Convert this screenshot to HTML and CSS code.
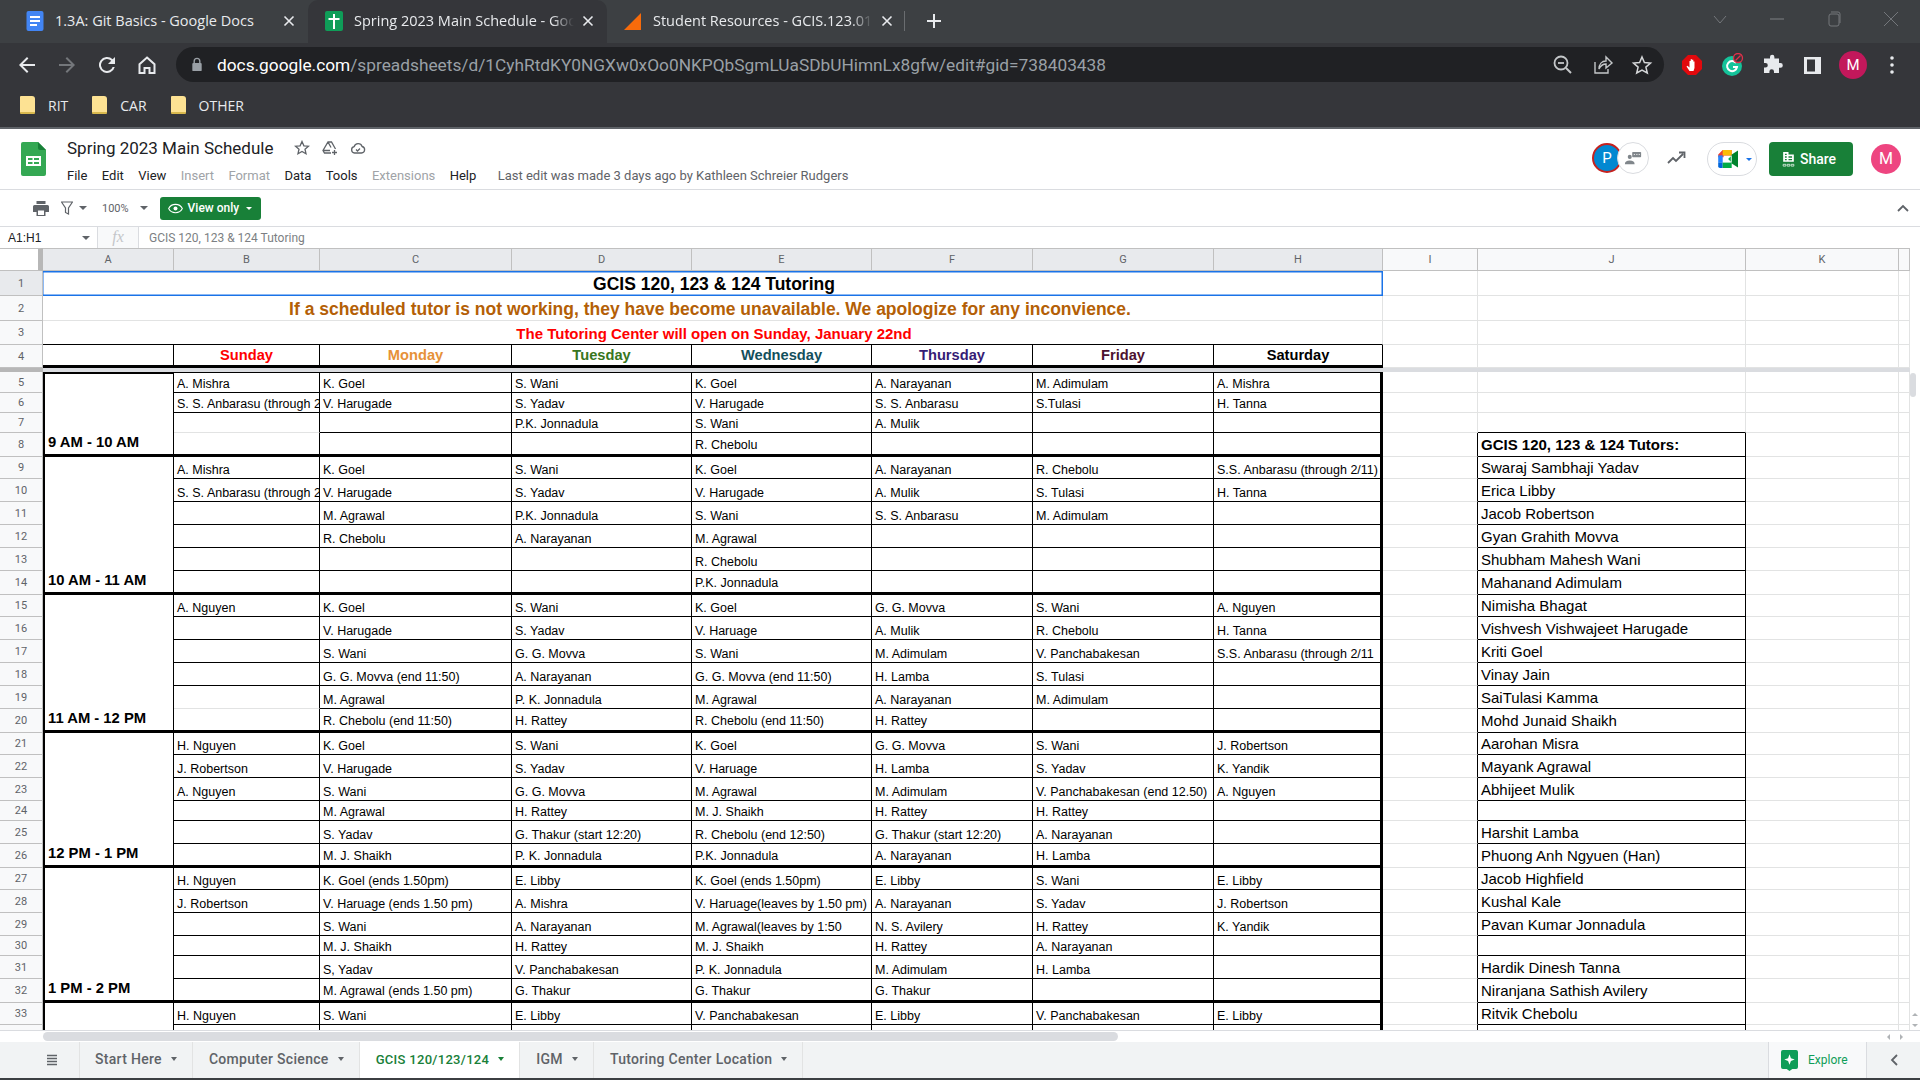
FILE: index.html
```html
<!DOCTYPE html>
<html lang="en">
  <head>
    <meta charset="UTF-8" />
    <title>Spring 2023 Main Schedule - Google Sheets</title>
    <link rel="stylesheet" href="styles.css">
  </head>

  <body>
    <!-- browser frame -->
    <div class="tabstrip">
      <div class="tab">
        <svg class="favicon" viewBox="0 0 20 20"><rect x="1.5" width="17" height="20" rx="2" fill="#4285f4"/><path d="M5 6h10M5 10h10M5 14h7" stroke="#fff" stroke-width="2"/></svg>
        <span class="tabtitle">1.3A: Git Basics - Google Docs</span>
        <svg class="tabclose" viewBox="0 0 12 12"><path d="M1.5 1.5l9 9M10.5 1.5l-9 9" stroke="#e8eaed" stroke-width="1.6"/></svg>
      </div>
      <div class="tab active">
        <svg class="favicon" viewBox="0 0 20 20"><rect x="1" width="18" height="20" rx="2" fill="#0f9d58"/><path d="M10 3v15M4.500 8h11" stroke="#fff" stroke-width="2"/></svg>
        <span class="tabtitle fade">Spring 2023 Main Schedule - Google Sheets</span>
        <svg class="tabclose" viewBox="0 0 12 12"><path d="M1.5 1.5l9 9M10.5 1.5l-9 9" stroke="#e8eaed" stroke-width="1.6"/></svg>
      </div>
      <div class="tab">
        <svg class="favicon" viewBox="0 0 20 20"><path d="M18 2v17H1z" fill="#f76b0b"/></svg>
        <span class="tabtitle fade">Student Resources - GCIS.123.01-2</span>
        <svg class="tabclose" viewBox="0 0 12 12"><path d="M1.5 1.5l9 9M10.5 1.5l-9 9" stroke="#e8eaed" stroke-width="1.6"/></svg>
      </div>
      <div class="tabsep"></div>
      <svg class="newtab" viewBox="0 0 16 16"><path d="M8 1v14M1 8h14" stroke="#e8eaed" stroke-width="2"/></svg>
      <div class="winbtns">
        <svg viewBox="0 0 16 16"><path d="M2 5l6 7 6-7" fill="none" stroke="#74777b"/></svg>
        <svg viewBox="0 0 16 16"><path d="M1 8h14" stroke="#74777b" stroke-width="1.2"/></svg>
        <svg viewBox="0 0 16 16"><rect x="3" y="3" width="10" height="12" rx="2" fill="none" stroke="#74777b"/><path d="M5 1h7a2 2 0 0 1 2 2v9" fill="none" stroke="#74777b"/></svg>
        <svg viewBox="0 0 16 16"><path d="M1 1l14 14M15 1L1 15" stroke="#74777b"/></svg>
      </div>
    </div>

    <div class="navbar">
      <svg class="navicon" viewBox="0 0 24 24"><path d="M20 11H7.800l5.600-5.600L12 4l-8 8 8 8 1.400-1.400L7.800 13H20z" fill="#e8eaed"/></svg>
      <svg class="navicon" viewBox="0 0 24 24"><path d="M4 11h12.200l-5.600-5.600L12 4l8 8-8 8-1.400-1.400 5.600-5.600H4z" fill="#74777b"/></svg>
      <svg class="navicon" viewBox="0 0 24 24"><path d="M17.650 6.350A8 8 0 1 0 19.740 14h-2.080a6 6 0 1 1-1.420-6.240L13 11h7V4z" fill="#e8eaed"/></svg>
      <svg class="navicon" viewBox="0 0 24 24"><path d="M12 4.500l7.500 6.800V20h-5v-5h-5v5h-5v-8.700z" fill="none" stroke="#e8eaed" stroke-width="2"/></svg>
      <div class="omnibox">
        <svg class="lock" viewBox="0 0 12 16"><path d="M3 7V4.500a3 3 0 0 1 6 0V7" fill="none" stroke="#9aa0a6" stroke-width="1.500"/><rect x="1" y="6.500" width="10" height="8.500" rx="1" fill="#9aa0a6"/></svg>
        <span class="url"><b>docs.google.com</b>/spreadsheets/d/1CyhRtdKY0NGXw0xOo0NKPQbSgmLUaSDbUHimnLx8gfw/edit#gid=738403438</span>
        <div class="omniicons">
          <svg class="navicon" viewBox="0 0 24 24"><circle cx="11" cy="10" r="6.500" fill="none" stroke="#c4c7c9" stroke-width="1.800"/><path d="M8 10h6" stroke="#c4c7c9" stroke-width="1.800"/><path d="M16 15l5 5" stroke="#c4c7c9" stroke-width="2"/></svg>
          <svg class="navicon" viewBox="0 0 24 24"><path d="M5 9v11h13v-4M9 16c0-5 3-8 7-8V4l6 6-6 5v-4c-3 0-5 1-7 5z" fill="none" stroke="#c4c7c9" stroke-width="1.400"/></svg>
          <svg class="navicon" viewBox="0 0 24 24"><path d="M12 4l2.400 5.600 6.100.5-4.600 4 1.400 5.900L12 17l-5.300 3 1.400-5.900-4.600-4 6.100-.5z" fill="none" stroke="#d5d7d9" stroke-width="1.500"/></svg>
        </div>
      </div>
      <svg class="navicon" viewBox="0 0 24 24"><path d="M8 2h8l6 6v8l-6 6H8l-6-6V8z" fill="#e2090d"/><path d="M9.500 18l-3-4.500 1-.8 2 1.800V8h1.200v4V6.200h1.300V12V6.800h1.300V12.500V8.500h1.200V15l-1 3z" fill="#fff"/></svg>
      <svg class="navicon" viewBox="0 0 24 24"><circle cx="12" cy="13" r="10" fill="#15c39a"/><path d="M16 10a5 5 0 1 0 1 4h-4" fill="none" stroke="#fff" stroke-width="2"/><circle cx="18" cy="5" r="4.500" fill="#35363a" stroke="#e2304a" stroke-width="1.300"/><path d="M15.500 7.500l5-5" stroke="#e2304a" stroke-width="1.300"/></svg>
      <svg class="navicon" viewBox="0 0 24 24"><path d="M10 4a2.200 2.200 0 0 1 4.400 0v1.500H19v4.600h1.500a2.300 2.300 0 0 1 0 4.600H19V20h-5v-1.500a2.300 2.300 0 0 0-4.600 0V20H4v-5.500h1.500a2.300 2.300 0 0 0 0-4.600H4V5.500h6z" fill="#e8eaed"/></svg>
      <svg class="navicon" viewBox="0 0 24 24"><rect x="4" y="4" width="17" height="17" fill="#e8eaed"/><rect x="7" y="6.500" width="8" height="12" fill="#35363a"/></svg>
      <div class="chromeuser">M</div>
      <svg class="kebab" viewBox="0 0 4 20"><circle cx="2" cy="3" r="1.800" fill="#e8eaed"/><circle cx="2" cy="10" r="1.800" fill="#e8eaed"/><circle cx="2" cy="17" r="1.800" fill="#e8eaed"/></svg>
    </div>

    <div class="bookmarks">
      <span class="mark"><i class="folder"></i>RIT</span>
      <span class="mark"><i class="folder"></i>CAR</span>
      <span class="mark"><i class="folder"></i>OTHER</span>
    </div>

    <!-- sheets app bar -->
    <header class="docbar">
      <svg class="sheetlogo" viewBox="0 0 25 34"><path d="M2 0h15l8 8v24a2 2 0 0 1-2 2H2a2 2 0 0 1-2-2V2a2 2 0 0 1 2-2z" fill="#34a853"/><path d="M17 0l8 8h-6a2 2 0 0 1-2-2z" fill="#188038"/><path d="M5 14h15v10H5zM7 16v2h4.500v-2zm6 0v2h5v-2zM7 20v2h4.500v-2zm6 0v2h5v-2z" fill="#fff" fill-rule="evenodd"/></svg>
      <div class="doctext">
        <div class="docline">
          <span class="doctitle">Spring 2023 Main Schedule</span>
          <svg class="docicon" viewBox="0 0 16 16"><path d="M8 1.500l1.900 4.300 4.600.4-3.500 3 1 4.500L8 11.400l-4 2.300 1-4.500-3.500-3 4.600-.4z" fill="none" stroke="#5f6368" stroke-width="1.300"/></svg>
          <svg class="docicon" viewBox="0 0 16 16"><path d="M9 13H2.500L1 10.500 6 2h3.500l4 7M6 2l3 5.500M1 10.500h7" fill="none" stroke="#5f6368" stroke-width="1.300"/><path d="M12.500 10v5M10 12.500h5" stroke="#5f6368" stroke-width="1.300"/></svg>
          <svg class="docicon" viewBox="0 0 16 16"><path d="M4.500 13a3.200 3.200 0 0 1-.4-6.300 4.200 4.200 0 0 1 8-.2A3.300 3.300 0 0 1 11.500 13zM6 9.500l1.500 1.500 2.500-2.500" fill="none" stroke="#5f6368" stroke-width="1.300"/></svg>
        </div>
        <nav class="menus">
          <span>File</span><span>Edit</span><span>View</span><span class="off">Insert</span><span class="off">Format</span><span>Data</span><span>Tools</span><span class="off">Extensions</span><span>Help</span>
          <span class="lastedit">Last edit was made 3 days ago by Kathleen Schreier Rudgers</span>
        </nav>
      </div>
      <div class="docright">
        <div class="avatars">
          <div class="avp">P</div>
          <div class="avchat">
            <svg viewBox="0 0 22 16"><circle cx="7" cy="6" r="2.500" fill="#80868b"/><path d="M1 15c0-3 2-4.500 6-4.500s6 1.500 6 4.500z" fill="#80868b"/><rect x="10" y="0" width="11" height="6.500" rx="1" fill="#80868b"/><path d="M12 3h1.500M15 3h1.500M18 3h1.500" stroke="#fff"/></svg>
          </div>
        </div>
        <svg class="trend" viewBox="0 0 20 14"><path d="M1 12l5-5 3 3 7-7M12 1.500h5.500V7" fill="none" stroke="#5f6368" stroke-width="1.800"/></svg>
        <div class="meet">
          <svg viewBox="0 0 24 20"><path d="M0 5l5-5h10v6H6v2H0z" fill="#ea4335" transform="translate(0 0)"/><path d="M5 0h10v6H5z" fill="#fbbc04"/><path d="M0 6h5v8H0z" fill="#2684fc"/><path d="M0 14h5v6H2a2 2 0 0 1-2-2z" fill="#0066da"/><path d="M5 14h10v6H5z" fill="#00ac47"/><path d="M15 5v10l7 4.500V.5z" fill="#00832d"/><path d="M15 6h-1v8h1l-4-4z" fill="#00ac47"/></svg>
          <i class="caret blue"></i>
        </div>
        <div class="share">
          <svg viewBox="0 0 14 18"><path d="M1 1h6v3h6v8H1zM3 3v1.500h2V3zm0 3v1.500h2V6zm4 0v1.500h4V6zM3 9v1.500h2V9zm4 0v1.500h4V9z" fill="#fff" fill-rule="evenodd"/><path d="M1 15h3v2H1zM5.500 15h3v2h-3zM10 15h3v2h-3z" fill="none" stroke="#fff" stroke-width=".8"/></svg>
          Share
        </div>
        <div class="appuser">M</div>
      </div>
    </header>

    <div class="toolbar">
      <svg class="printer" viewBox="0 0 16 15"><path d="M3.500 0h9v3h-9zM1.500 4h13A1.500 1.500 0 0 1 16 5.500V11h-3.500v4h-9v-4H0V5.500A1.500 1.500 0 0 1 1.500 4z" fill="#5f6368"/><path d="M5 9.500h6V14H5z" fill="#fff"/></svg>
      <svg class="funnel" viewBox="0 0 12 14"><path d="M.5 1h11L7.500 7v6l-3-1.500V7z" fill="none" stroke="#5f6368" stroke-width="1.200"/></svg>
      <i class="caret"></i>
      <span class="zoomlevel">100%</span>
      <i class="caret zoomcaret"></i>
      <div class="viewonly">
        <svg viewBox="0 0 18 12"><path d="M9 1C5 1 2 3.500 .8 6 2 8.500 5 11 9 11s7-2.500 8.200-5C16 3.500 13 1 9 1z" fill="none" stroke="#fff" stroke-width="1.300"/><circle cx="9" cy="6" r="2.400" fill="#fff"/></svg>
        View only
        <i class="caret white"></i>
      </div>
      <svg class="collapse" viewBox="0 0 12 8"><path d="M1 7l5-5 5 5" fill="none" stroke="#5f6368" stroke-width="1.800"/></svg>
    </div>

    <div class="formulabar">
      <div class="namebox">A1:H1<i class="caret"></i></div>
      <div class="fx"><em>fx</em></div>
      <div class="formula">GCIS 120, 123 &amp; 124 Tutoring</div>
    </div>

    <!-- grid -->
    <div class="sheetarea">
      <div class="gridclip">
        <table class="grid">
          <colgroup>
            <col class="c-head"><col class="c-a"><col class="c-b"><col class="c-c"><col class="c-d"><col class="c-e"><col class="c-f"><col class="c-g"><col class="c-h"><col class="c-i"><col class="c-j"><col class="c-k"><col class="c-l">
          </colgroup>
          <tr class="letters">
            <th class="corner"></th><th class="sel">A</th><th class="sel">B</th><th class="sel">C</th><th class="sel">D</th><th class="sel">E</th><th class="sel">F</th><th class="sel">G</th><th class="sel">H</th><th>I</th><th>J</th><th>K</th><th></th>
          </tr>
          <tr class="h25"><th class="sel">1</th><td colspan="8" class="banner title selected">GCIS 120, 123 &amp; 124 Tutoring</td><td></td><td></td><td></td><td></td></tr>
          <tr class="h25"><th>2</th><td colspan="8" class="banner amber">If a scheduled tutor is not working, they have become unavailable. We apologize for any inconvience.</td><td></td><td></td><td></td><td></td></tr>
          <tr class="h24"><th>3</th><td colspan="8" class="banner red">The Tutoring Center will open on Sunday, January 22nd</td><td></td><td></td><td></td><td></td></tr>
          <tr class="h23 days end">
            <th>4</th><td></td><td class="sun">Sunday</td><td class="mon">Monday</td><td class="tue">Tuesday</td><td class="wed">Wednesday</td><td class="thu">Thursday</td><td class="fri">Friday</td><td class="sat">Saturday</td><td></td><td></td><td></td><td></td>
          </tr>
          <tr class="freeze"><th></th><td colspan="12"></td></tr>

          <tr class="h21 first"><th>5</th><td rowspan="4" class="slot">9 AM - 10 AM</td><td>A. Mishra</td><td>K. Goel</td><td>S. Wani</td><td>K. Goel</td><td>A. Narayanan</td><td>M. Adimulam</td><td>A. Mishra</td><td></td><td></td><td></td><td></td></tr>
          <tr class="h20"><th>6</th><td>S. S. Anbarasu (through 2/11)</td><td>V. Harugade</td><td>S. Yadav</td><td>V. Harugade</td><td>S. S. Anbarasu</td><td>S.Tulasi</td><td>H. Tanna</td><td></td><td></td><td></td><td></td></tr>
          <tr class="h20"><th>7</th><td class="thin"></td><td></td><td>P.K. Jonnadula</td><td>S. Wani</td><td>A. Mulik</td><td></td><td></td><td></td><td class="above"></td><td></td><td></td></tr>
          <tr class="h24 end t"><th>8</th><td></td><td></td><td></td><td>R. Chebolu</td><td></td><td></td><td></td><td></td><td class="tutor head">GCIS 120, 123 &amp; 124 Tutors:</td><td></td><td></td></tr>

          <tr class="h22 t"><th>9</th><td rowspan="6" class="slot">10 AM - 11 AM</td><td>A. Mishra</td><td>K. Goel</td><td>S. Wani</td><td>K. Goel</td><td>A. Narayanan</td><td>R. Chebolu</td><td>S.S. Anbarasu (through 2/11)</td><td></td><td class="tutor">Swaraj Sambhaji Yadav</td><td></td><td></td></tr>
          <tr class="h23 t"><th>10</th><td>S. S. Anbarasu (through 2/11)</td><td>V. Harugade</td><td>S. Yadav</td><td>V. Harugade</td><td>A. Mulik</td><td>S. Tulasi</td><td>H. Tanna</td><td></td><td class="tutor">Erica Libby</td><td></td><td></td></tr>
          <tr class="h23 t"><th>11</th><td></td><td>M. Agrawal</td><td>P.K. Jonnadula</td><td>S. Wani</td><td>S. S. Anbarasu</td><td>M. Adimulam</td><td></td><td></td><td class="tutor">Jacob Robertson</td><td></td><td></td></tr>
          <tr class="h23 t"><th>12</th><td></td><td>R. Chebolu</td><td>A. Narayanan</td><td>M. Agrawal</td><td></td><td></td><td></td><td></td><td class="tutor">Gyan Grahith Movva</td><td></td><td></td></tr>
          <tr class="h23 t"><th>13</th><td></td><td></td><td></td><td>R. Chebolu</td><td></td><td></td><td></td><td></td><td class="tutor">Shubham Mahesh Wani</td><td></td><td></td></tr>
          <tr class="h24 end t"><th>14</th><td></td><td></td><td></td><td>P.K. Jonnadula</td><td></td><td></td><td></td><td></td><td class="tutor">Mahanand Adimulam</td><td></td><td></td></tr>

          <tr class="h22 t"><th>15</th><td rowspan="6" class="slot">11 AM - 12 PM</td><td>A. Nguyen</td><td>K. Goel</td><td>S. Wani</td><td>K. Goel</td><td>G. G. Movva</td><td>S. Wani</td><td>A. Nguyen</td><td></td><td class="tutor">Nimisha Bhagat</td><td></td><td></td></tr>
          <tr class="h23 t"><th>16</th><td></td><td>V. Harugade</td><td>S. Yadav</td><td>V. Haruage</td><td>A. Mulik</td><td>R. Chebolu</td><td>H. Tanna</td><td></td><td class="tutor">Vishvesh Vishwajeet Harugade</td><td></td><td></td></tr>
          <tr class="h23 t"><th>17</th><td></td><td>S. Wani</td><td>G. G. Movva</td><td>S. Wani</td><td>M. Adimulam</td><td>V. Panchabakesan</td><td>S.S. Anbarasu (through 2/11</td><td></td><td class="tutor">Kriti Goel</td><td></td><td></td></tr>
          <tr class="h23 t"><th>18</th><td></td><td>G. G. Movva (end 11:50)</td><td>A. Narayanan</td><td>G. G. Movva (end 11:50)</td><td>H. Lamba</td><td>S. Tulasi</td><td></td><td></td><td class="tutor">Vinay Jain</td><td></td><td></td></tr>
          <tr class="h23 t"><th>19</th><td class="thin"></td><td>M. Agrawal</td><td>P. K. Jonnadula</td><td>M. Agrawal</td><td>A. Narayanan</td><td>M. Adimulam</td><td></td><td></td><td class="tutor">SaiTulasi Kamma</td><td></td><td></td></tr>
          <tr class="h24 end t"><th>20</th><td></td><td>R. Chebolu (end 11:50)</td><td>H. Rattey</td><td>R. Chebolu (end 11:50)</td><td>H. Rattey</td><td></td><td></td><td></td><td class="tutor">Mohd Junaid Shaikh</td><td></td><td></td></tr>

          <tr class="h22 t"><th>21</th><td rowspan="6" class="slot">12 PM - 1 PM</td><td>H. Nguyen</td><td>K. Goel</td><td>S. Wani</td><td>K. Goel</td><td>G. G. Movva</td><td>S. Wani</td><td>J. Robertson</td><td></td><td class="tutor">Aarohan Misra</td><td></td><td></td></tr>
          <tr class="h23 t"><th>22</th><td>J. Robertson</td><td>V. Harugade</td><td>S. Yadav</td><td>V. Haruage</td><td>H. Lamba</td><td>S. Yadav</td><td>K. Yandik</td><td></td><td class="tutor">Mayank Agrawal</td><td></td><td></td></tr>
          <tr class="h23 t"><th>23</th><td>A. Nguyen</td><td>S. Wani</td><td>G. G. Movva</td><td>M. Agrawal</td><td>M. Adimulam</td><td>V. Panchabakesan (end 12.50)</td><td>A. Nguyen</td><td></td><td class="tutor">Abhijeet Mulik</td><td></td><td></td></tr>
          <tr class="h20 t"><th>24</th><td></td><td>M. Agrawal</td><td>H. Rattey</td><td>M. J. Shaikh</td><td>H. Rattey</td><td>H. Rattey</td><td></td><td></td><td class="tutor"></td><td></td><td></td></tr>
          <tr class="h23 t"><th>25</th><td></td><td>S. Yadav</td><td>G. Thakur (start 12:20)</td><td>R. Chebolu (end 12:50)</td><td>G. Thakur (start 12:20)</td><td>A. Narayanan</td><td></td><td></td><td class="tutor">Harshit Lamba</td><td></td><td></td></tr>
          <tr class="h24 end t"><th>26</th><td></td><td>M. J. Shaikh</td><td>P. K. Jonnadula</td><td>P.K. Jonnadula</td><td>A. Narayanan</td><td>H. Lamba</td><td></td><td></td><td class="tutor">Phuong Anh Ngyuen (Han)</td><td></td><td></td></tr>

          <tr class="h22 t"><th>27</th><td rowspan="6" class="slot">1 PM - 2 PM</td><td>H. Nguyen</td><td>K. Goel (ends 1.50pm)</td><td>E. Libby</td><td>K. Goel (ends 1.50pm)</td><td>E. Libby</td><td>S. Wani</td><td>E. Libby</td><td></td><td class="tutor">Jacob Highfield</td><td></td><td></td></tr>
          <tr class="h23 t"><th>28</th><td>J. Robertson</td><td>V. Haruage (ends 1.50 pm)</td><td>A. Mishra</td><td>V. Haruage(leaves by 1.50 pm)</td><td>A. Narayanan</td><td>S. Yadav</td><td>J. Robertson</td><td></td><td class="tutor">Kushal Kale</td><td></td><td></td></tr>
          <tr class="h23 t"><th>29</th><td></td><td>S. Wani</td><td>A. Narayanan</td><td>M. Agrawal(leaves by 1:50</td><td>N. S. Avilery</td><td>H. Rattey</td><td>K. Yandik</td><td></td><td class="tutor">Pavan Kumar Jonnadula</td><td></td><td></td></tr>
          <tr class="h20 t"><th>30</th><td></td><td>M. J. Shaikh</td><td>H. Rattey</td><td>M. J. Shaikh</td><td>H. Rattey</td><td>A. Narayanan</td><td></td><td></td><td class="tutor"></td><td></td><td></td></tr>
          <tr class="h23 t"><th>31</th><td></td><td>S, Yadav</td><td>V. Panchabakesan</td><td>P. K. Jonnadula</td><td>M. Adimulam</td><td>H. Lamba</td><td></td><td></td><td class="tutor">Hardik Dinesh Tanna</td><td></td><td></td></tr>
          <tr class="h24 end t"><th>32</th><td></td><td>M. Agrawal (ends 1.50 pm)</td><td>G. Thakur</td><td>G. Thakur</td><td>G. Thakur</td><td></td><td></td><td></td><td class="tutor">Niranjana Sathish Avilery</td><td></td><td></td></tr>

          <tr class="h22 t"><th>33</th><td rowspan="2" class="slot"></td><td>H. Nguyen</td><td>S. Wani</td><td>E. Libby</td><td>V. Panchabakesan</td><td>E. Libby</td><td>V. Panchabakesan</td><td>E. Libby</td><td></td><td class="tutor">Ritvik Chebolu</td><td></td><td></td></tr>
          <tr class="h23 t"><th>34</th><td></td><td></td><td></td><td></td><td></td><td></td><td></td><td></td><td class="tutor"></td><td></td><td></td></tr>
        </table>
      </div>
      <div class="vscroll">
        <div class="vthumb"></div>
        <i class="arrow up"></i>
        <i class="arrow down"></i>
      </div>
    </div>

    <div class="hscroll">
      <div class="hthumb"></div>
      <i class="arrow left"></i>
      <i class="arrow right"></i>
    </div>

    <footer class="sheettabs">
      <div class="allsheets"><svg viewBox="0 0 12 12"><path d="M1 1.500h10M1 4.500h10M1 7.500h10M1 10.500h10" stroke="#5f6368" stroke-width="1.500"/></svg></div>
      <div class="sheettab">Start Here<i class="caret"></i></div>
      <div class="sheettab">Computer Science<i class="caret"></i></div>
      <div class="sheettab current">GCIS 120/123/124<i class="caret green"></i></div>
      <div class="sheettab">IGM<i class="caret"></i></div>
      <div class="sheettab">Tutoring Center Location<i class="caret"></i></div>
      <div class="explore">
        <svg viewBox="0 0 18 22"><path d="M2 0h14a2 2 0 0 1 2 2v16a2 2 0 0 1-2 2h-4l-3 2-3-2H2a2 2 0 0 1-2-2V2a2 2 0 0 1 2-2z" fill="#0f9d58"/><path d="M9 4.500l1.500 4 4 1.500-4 1.500-1.500 4-1.500-4-4-1.500 4-1.500z" fill="#fff"/></svg>
        Explore
      </div>
      <div class="sidetoggle"><svg viewBox="0 0 8 12"><path d="M7 1L2 6l5 5" fill="none" stroke="#5f6368" stroke-width="1.800"/></svg></div>
    </footer>
  </body>
</html>
```

FILE: styles.css
```css
* {
  box-sizing: border-box;
}

html,
body {
  margin: 0;
  height: 1080px;
  overflow: hidden;
}

body {
  background-color: white;
  font-family: Roboto, "Liberation Sans", sans-serif;
  color: #202124;
}

/* browser frame */
.tabstrip {
  display: flex;
  align-items: center;
  height: 43px;
  padding-left: 9px;
  background-color: #3d4043;
}

.tab {
  display: flex;
  align-items: center;
  width: 299px;
  height: 43px;
  padding: 0 13px 2px 16px;
  color: #e8eaed;
  font-family: "Open Sans", sans-serif;
  font-size: 14.500px;
}

.tab.active {
  border-radius: 10px 10px 0 0;
  background-color: #35363a;
}

.favicon {
  flex: none;
  width: 20px;
  height: 20px;
  margin-right: 10px;
}

.tabtitle {
  flex: 1;
  overflow: hidden;
  white-space: nowrap;
}

.tabtitle.fade {
  -webkit-mask-image: linear-gradient(to right, black 90%, transparent);
}

.tabclose {
  flex: none;
  width: 12px;
  height: 12px;
  margin-left: 8px;
}

.tabsep {
  width: 1px;
  height: 20px;
  margin: 0 0 2px -2px;
  background-color: #6a6d70;
}

.newtab {
  width: 16px;
  height: 16px;
  margin: 0 0 2px 21px;
}

.winbtns {
  display: flex;
  gap: 41px;
  margin-left: auto;
  padding: 0 21px 6px 0;
}

.winbtns svg {
  width: 16px;
  height: 16px;
}

.navbar {
  display: flex;
  align-items: center;
  height: 45px;
  padding: 0 0 2px 15px;
  background-color: #35363a;
}

.navbar > .navicon {
  margin-right: 16px;
}

.navicon {
  flex: none;
  width: 24px;
  height: 24px;
}

.omnibox {
  display: flex;
  align-items: center;
  width: 1488px;
  height: 35px;
  margin: 0 16px 0 1px;
  padding: 0 10px 0 15px;
  border-radius: 18px;
  background-color: #202124;
}

.lock {
  width: 12px;
  height: 15px;
  margin-right: 14px;
}

.url {
  color: #9aa0a6;
  font-family: Roboto, sans-serif;
  font-size: 17.300px;
  white-space: nowrap;
}

.url b {
  color: #fff;
  font-weight: 400;
}

.omniicons {
  display: flex;
  gap: 16px;
  margin-left: auto;
}

.chromeuser {
  flex: none;
  width: 28px;
  height: 28px;
  margin: 0 23px 0 -1px;
  border-radius: 50%;
  background-color: #c2185b;
  color: #fff;
  font-size: 15px;
  line-height: 28px;
  text-align: center;
}

.kebab {
  width: 4px;
  height: 20px;
}

.bookmarks {
  display: flex;
  align-items: center;
  height: 41px;
  padding: 0 0 5px 20px;
  border-bottom: 2px solid #5f6368;
  background-color: #35363a;
  color: #e8eaed;
  font-family: "Open Sans", sans-serif;
  font-size: 14px;
}

.mark {
  display: flex;
  align-items: center;
  margin-right: 24px;
}

.folder {
  width: 15px;
  height: 18px;
  margin-right: 13px;
  border-radius: 1px 3px 1px 1px;
  border-bottom: 2px solid #d9b94e;
  background-color: #fde293;
}

/* sheets app bar */
.docbar {
  display: flex;
  height: 61px;
  padding: 13px 0 0 21px;
  border-bottom: 1px solid #dadce0;
}

.sheetlogo {
  width: 25px;
  height: 34px;
}

.doctext {
  margin-left: 21px;
}

.docline {
  display: flex;
  align-items: center;
  height: 18px;
  margin-top: -3px;
}

.doctitle {
  margin-right: 21px;
  font-size: 17px;
}

.docicon {
  width: 16px;
  height: 16px;
  margin-right: 12px;
}

.menus {
  display: flex;
  gap: 14.400px;
  margin-top: 11px;
  font-size: 13px;
}

.menus .off {
  color: #a0a3a7;
}

.lastedit {
  margin-left: 7px;
  color: #5f6368;
  font-size: 13px;
  line-height: 15px;
}

.docright {
  display: flex;
  margin-left: auto;
}

.avatars {
  display: flex;
  align-items: center;
  height: 32px;
}

.avp {
  width: 30px;
  height: 30px;
  border: 2px solid #c5221f;
  border-radius: 50%;
  background-color: #0288d1;
  color: #fff;
  font-size: 15px;
  line-height: 26px;
  text-align: center;
}

.avchat {
  display: flex;
  align-items: center;
  justify-content: center;
  width: 32px;
  height: 32px;
  margin-left: -5px;
  border: 1px solid #dadce0;
  border-radius: 50%;
  background-color: #fff;
}

.avchat svg {
  width: 18px;
  height: 13px;
}

.trend {
  width: 20px;
  height: 14px;
  margin: 9px 20px 0 18px;
}

.meet {
  display: flex;
  align-items: center;
  gap: 6px;
  width: 50px;
  height: 34px;
  margin-right: 12px;
  padding-left: 10px;
  border: 1px solid #dadce0;
  border-radius: 17px;
}

.meet svg {
  width: 22px;
  height: 18px;
}

.share {
  display: flex;
  align-items: center;
  justify-content: center;
  gap: 5px;
  width: 84px;
  height: 34px;
  padding-right: 4px;
  border-radius: 4px;
  background-color: #188038;
  color: #fff;
  font-size: 14px;
  font-weight: 500;
}

.share svg {
  width: 13px;
  height: 16px;
}

.appuser {
  width: 30px;
  height: 30px;
  margin: 2px 19px 0 18px;
  border-radius: 50%;
  background-color: #ee4580;
  color: #fff;
  font-size: 16px;
  line-height: 30px;
  text-align: center;
}

.toolbar {
  display: flex;
  align-items: center;
  height: 37px;
  padding-left: 33px;
  border-bottom: 1px solid #dadce0;
}

.printer {
  width: 16px;
  height: 15px;
  margin-right: 12px;
}

.funnel {
  width: 12px;
  height: 14px;
  margin-right: 6px;
}

.zoomlevel {
  margin-left: 15px;
  color: #5f6368;
  font-size: 11px;
}

.zoomcaret {
  margin: 0 12px 0 11px;
}

.viewonly {
  display: flex;
  align-items: center;
  width: 101px;
  height: 23px;
  padding-left: 8px;
  border-radius: 3px;
  background-color: #188038;
  color: #fff;
  font-size: 12px;
  font-weight: 500;
}

.viewonly svg {
  width: 15px;
  height: 11px;
  margin-right: 5px;
}

.viewonly .caret {
  margin-left: 7px;
}

.collapse {
  width: 12px;
  height: 8px;
  margin-left: auto;
  margin-right: 11px;
}

.caret {
  display: inline-block;
  flex: none;
  width: 0;
  height: 0;
  border-top: 4px solid #5f6368;
  border-right: 4px solid transparent;
  border-left: 4px solid transparent;
}

.caret.white {
  border-top-color: #fff;
  border-width: 3px 3px 0;
}

.caret.blue {
  border-top-color: #1a73e8;
  border-width: 3.500px 3.500px 0;
}

.caret.green {
  border-top-color: #188038;
}

.formulabar {
  display: flex;
  align-items: center;
  height: 21px;
  font-size: 12px;
}

.namebox {
  display: flex;
  align-items: center;
  justify-content: space-between;
  width: 98px;
  height: 21px;
  padding: 0 7px 0 8px;
  border-right: 1px solid #dadce0;
  font-family: "Liberation Sans", sans-serif;
  font-size: 12px;
}

.fx {
  width: 41px;
  height: 21px;
  border-right: 1px solid #dadce0;
  background-color: #f8f9fa;
  color: #c4c6c9;
  font-family: "Liberation Serif", serif;
  font-size: 16px;
  line-height: 20px;
  text-align: center;
}

.formula {
  padding-left: 10px;
  color: #7c7f83;
}

/* grid */
.sheetarea {
  display: flex;
  height: 782px;
}

.gridclip {
  flex: none;
  width: 1910px;
  height: 782px;
  overflow: hidden;
}

.grid {
  width: 1910px;
  border-collapse: separate;
  border-spacing: 0;
  table-layout: fixed;
  font-family: "Liberation Sans", sans-serif;
}

.c-head { width: 43px; }
.c-a { width: 131px; }
.c-b { width: 146px; }
.c-c { width: 192px; }
.c-d { width: 180px; }
.c-e { width: 180px; }
.c-f { width: 161px; }
.c-g { width: 181px; }
.c-h { width: 169px; }
.c-i { width: 95px; }
.c-j { width: 268px; }
.c-k { width: 153px; }
.c-l { width: 11px; }

.grid th {
  padding: 0;
  border-right: 1px solid #c0c0c0;
  border-bottom: 1px solid #c0c0c0;
  background-color: #f8f9fa;
  color: #5f6368;
  font-family: Roboto, sans-serif;
  font-size: 11px;
  font-weight: 400;
}

.grid th.sel {
  background-color: #e8eaed;
}

.grid th.corner {
  border-top: 1px solid #c0c0c0;
  border-right: 5px solid #b7b7b7;
  background-color: #fff;
}

.letters th {
  height: 23px;
  border-top: 1px solid #c0c0c0;
}

.grid td {
  padding: 0 0 0 3px;
  overflow: hidden;
  border-right: 1px solid #000;
  border-bottom: 1px solid #000;
  color: #000;
  font-size: 12.500px;
  line-height: 15px;
  vertical-align: bottom;
  white-space: nowrap;
}

.h20 td, .h20 th { height: 20px; }
.h21 td, .h21 th { height: 21px; }
.h22 td, .h22 th { height: 22px; }
.h23 td, .h23 th { height: 23px; }
.h24 td, .h24 th { height: 24px; }
.h25 td, .h25 th { height: 25px; }

/* columns I, J, K and the stub of L have the plain sheet lines */
.grid td:nth-last-child(-n+2),
.grid td:nth-last-child(4),
tr:not(.t) td:nth-last-child(3) {
  border-right-color: #e2e3e3;
  border-bottom-color: #e2e3e3;
}

.t td:nth-last-child(4) {
  border-right-color: #000;
}

.freeze ~ tr td:nth-last-child(5) {
  border-right-width: 3px;
}

.grid tr td.above {
  border-bottom-color: #000;
}

.grid td.thin {
  border-bottom-color: #e2e3e3;
}

.end td:nth-last-child(n+5) {
  padding-bottom: 1px;
  border-bottom-width: 3px;
}

.first td:nth-last-child(n+5) {
  border-top: 1px solid #000;
}

.grid td.banner {
  border-right-color: #e2e3e3;
  border-bottom-color: #e2e3e3;
  font-weight: 700;
  text-align: center;
}

.grid td.title {
  padding-bottom: 1px;
  font-size: 17.500px;
  line-height: 20px;
}

.grid td.selected {
  border: 1px solid #1a73e8;
  border-left-width: 0;
  box-shadow: inset 0 0 0 .5px #1a73e8;
}

.grid td.amber {
  padding: 0 5px 1px 0;
  color: #b45f06;
  font-size: 17.500px;
  line-height: 20px;
}

.grid td.red {
  padding-bottom: 2px;
  border-bottom-color: #000;
  color: #f00;
  font-size: 15px;
  line-height: 17px;
}

.days td {
  padding: 0 0 1px;
  font-size: 14.670px;
  font-weight: 700;
  line-height: 17px;
  text-align: center;
}

.sun { color: #f00 !important; }
.mon { color: #e69138 !important; }
.tue { color: #38761d !important; }
.wed { color: #134f5c !important; }
.thu { color: #351c75 !important; }
.fri { color: #4c1130 !important; }
.sat { color: #000 !important; }

.freeze td,
.freeze th {
  height: 4px;
  border: 0 !important;
  background-color: #dadce0;
}

.freeze th {
  background-color: #b7b7b7;
}

.grid td.slot {
  padding: 0 0 3px 3px;
  border-bottom-width: 3px;
  border-left: 2px solid #000;
  font-size: 14.800px;
  font-weight: 700;
  line-height: 17px;
}

.first td.slot {
  border-top-width: 2px;
}

.grid td.tutor {
  padding-bottom: 2px;
  font-size: 15px;
  line-height: 17px;
}

.end td.tutor {
  padding-bottom: 3px;
}

.grid td.head {
  font-size: 15px;
  font-weight: 700;
}

/* scrollbars */
.vscroll {
  position: relative;
  flex: none;
  width: 10px;
  height: 782px;
  background-color: #fff;
}

.vthumb {
  width: 6px;
  height: 24px;
  margin-top: 125px;
  border-radius: 3px;
  background-color: #dadce0;
}

.arrow {
  position: absolute;
  width: 0;
  height: 0;
  border: 3px solid transparent;
}

.arrow.up {
  right: 2px;
  bottom: 14px;
  border-bottom-color: #b0b3b6;
}

.arrow.down {
  right: 2px;
  bottom: 0;
  border-top-color: #b0b3b6;
}

.hscroll {
  position: relative;
  height: 12px;
  padding: 1px 0 0 43px;
  border-top: 1px solid #dadce0;
  background-color: #fff;
}

.hthumb {
  width: 1075px;
  height: 9px;
  border-radius: 5px;
  background-color: #dadce0;
}

.arrow.left {
  top: 3px;
  right: 30px;
  border-right-color: #b0b3b6;
}

.arrow.right {
  top: 3px;
  right: 14px;
  border-left-color: #b0b3b6;
}

/* sheet tabs */
.sheettabs {
  display: flex;
  height: 38px;
  border-bottom: 2px solid #3c3f42;
  background-color: #f1f3f4;
  font-size: 14px;
  font-weight: 500;
  letter-spacing: .3px;
  color: #5f6368;
}

.allsheets {
  display: flex;
  align-items: center;
  width: 80px;
  padding-left: 46px;
  border-right: 1px solid #e2e3e3;
}

.allsheets svg {
  width: 12px;
  height: 12px;
}

.sheettab {
  display: flex;
  align-items: center;
  gap: 9px;
  padding: 0 15px 2px 16px;
  border-right: 1px solid #e2e3e3;
}

.sheettab:nth-child(2) {
  padding-left: 15px;
}

.sheettab .caret {
  border-width: 4px 3.500px 0;
}

.sheettab.current {
  background-color: #fff;
  color: #188038;
  font-size: 13px;
}

.explore {
  display: flex;
  align-items: center;
  gap: 10px;
  width: 99px;
  margin-left: auto;
  padding-left: 12px;
  border-right: 1px solid #dadce0;
  border-left: 1px solid #dadce0;
  background-color: #f8f9fa;
  color: #0f9d58;
  font-size: 12px;
  font-weight: 400;
  letter-spacing: 0;
}

.explore svg {
  width: 17px;
  height: 21px;
}

.sidetoggle {
  display: flex;
  align-items: center;
  width: 53px;
  padding-left: 23px;
}

.sidetoggle svg {
  width: 8px;
  height: 12px;
}
```
